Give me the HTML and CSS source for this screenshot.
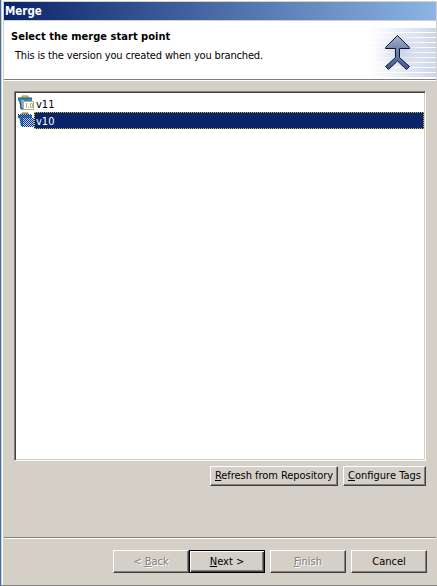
FILE: index.html
```html
<!DOCTYPE html>
<html lang="en">
<head>
<meta charset="utf-8">
<title>Merge</title>
<link rel="stylesheet" href="styles.css">
</head>
<body>
<main class="window">
  <div class="titlebar"><span class="t-title">Merge</span></div>
  <header class="banner">
    <div class="heading">
      <h1><span class="t-head">Select the merge start point</span></h1>
      <p><span class="t-desc">This is the version you created when you branched.</span></p>
    </div>
    <svg class="art" width="76" height="58" viewBox="0 0 76 58">
      <defs>
        <linearGradient id="fade"><stop offset="0" stop-color="#fff"/><stop offset=".4" stop-color="#fff" stop-opacity=".65"/><stop offset="1" stop-color="#fff" stop-opacity="0"/></linearGradient>
        <radialGradient id="glow"><stop offset="0" stop-color="#bcc4e4"/><stop offset="1" stop-color="#e6ebf6" stop-opacity="0"/></radialGradient>
        <linearGradient id="steel" gradientUnits="userSpaceOnUse" x1="0" y1="14" x2="0" y2="48"><stop offset="0" stop-color="#a9b4cc"/><stop offset=".4" stop-color="#7388b4"/><stop offset="1" stop-color="#3e5c95"/></linearGradient>
        <pattern id="lines" width="6" height="5" patternUnits="userSpaceOnUse" y="2"><path d="M0 0H6V4H0Z" fill="#ccd6ea"/></pattern>
      </defs>
      <path d="M8 7H76V56H8Z" fill="url(#lines)"/>
      <path d="M8 7H76V56H8Z" fill="url(#fade)"/>
      <ellipse cx="42" cy="31" rx="29" ry="25" fill="url(#glow)" opacity=".7"/>
      <path d="M37.500 14.500L49.500 26.500V27.500H39.500V36.500L49.500 45.500L46.500 48.500L37.500 40L28.500 48.500L25.500 45.500L35.500 36.500V27.500H25.500V26.500Z" fill="url(#steel)" stroke="#10182e"/>
    </svg>
  </header>
  <section class="content">
    <div class="list">
      <div class="row">
        <svg width="16" height="16" viewBox="0 0 16 16">
          <path d="M4 3V1H10V3" fill="#f2d36b" stroke="#a98635"/>
          <path d="M0 3H14V6H0Z" fill="#348bb5"/><path d="M1 5H14L12 14H3Z" fill="#3f7fb5"/>
          <path d="M0 3H14M2 6L3 14H6" fill="none" stroke="#17557d"/><path d="M3 5H6V13H4Z" fill="#71bed1"/>
          <path d="M5.500 6.500H15.500V14.500H5.500Z" fill="#fffdf0" stroke="#b8ac83"/>
          <path d="M8.500 8V13M10 12.500H11M12.500 8.500H14.500V12.500H12.500Z" fill="none" stroke="#b7b1a0"/>
        </svg>
        <span class="label"><span class="t-row">v11</span></span>
      </div>
      <div class="row selected">
        <svg width="16" height="16" viewBox="0 0 16 16">
          <defs><pattern id="check" width="2" height="2" patternUnits="userSpaceOnUse"><path d="M0 0H1V1H0ZM1 1H2V2H1Z" fill="#173a86"/></pattern></defs>
          <path d="M4 3V1H10V3" fill="#d3bd75" stroke="#796a43"/>
          <path d="M0 3H14V6H0Z" fill="#348bb5"/><path d="M1 5H14L12 14H3Z" fill="#3f86c5"/><path d="M5 6H16V15H5Z" fill="#b9cbe6"/>
          <path d="M0 2H14V6H16V15H3L2 6H0Z" fill="url(#check)"/>
        </svg>
        <span class="label"><span class="t-row">v10</span></span>
      </div>
    </div>
    <div class="tools">
      <button class="btn refresh"><span class="t-refresh"><u>R</u>efresh from Repository</span></button>
      <button class="btn config"><span class="t-config"><u>C</u>onfigure Tags</span></button>
    </div>
  </section>
  <footer>
    <button class="btn nav disabled" disabled><span class="t-back">&lt; <u>B</u>ack</span></button>
    <button class="btn nav default"><span class="t-next"><u>N</u>ext &gt;</span></button>
    <button class="btn nav disabled finish" disabled><span class="t-finish"><u>F</u>inish</span></button>
    <button class="btn nav cancel"><span class="t-cancel">Cancel</span></button>
  </footer>
</main>
</body>
</html>
```
FILE: styles.css
```css
* { box-sizing: border-box; }
body { margin: 0; overflow: hidden; font: 11px/14px "DejaVu Sans Condensed", "DejaVu Sans", sans-serif; font-stretch: condensed; color: #000; }
span { white-space: nowrap; }
.window { width: 437px; height: 586px; display: flex; flex-direction: column; background: #d4d0c8; border-left: 1px solid #3a6eb5; border-bottom: 1px solid #808080; padding: 2px 1px 0 3px; box-shadow: inset 1px 0 #d4d0c8, inset 2px 1px #fff; }
.titlebar { height: 18px; padding: 2px 0 0 1px; background: linear-gradient(90deg, #0a246a, #8cb4e4); color: #fff; font-weight: bold; font-size: 11.5px; }
.banner { height: 59px; margin-top: 1px; display: flex; justify-content: space-between; background: #fff; border-bottom: 1px solid #808080; box-shadow: 0 1px #fff; }
.heading { padding: 9px 0 0 7px; }
h1 { margin: 0; font-size: 11px; line-height: 14px; font-weight: bold; letter-spacing: .03px; }
p { margin: 5px 0 0 4px; }
.t-desc { letter-spacing: -.17px; }
.content { height: 457px; padding: 11px 10px 0; }
.list { width: 412px; height: 370px; background: #fff; border: 1px solid; border-color: #808080 #fff #fff #808080; box-shadow: inset 1px 1px #404040, inset -1px -1px #d4d0c8; padding: 3px 1px 1px 3px; }
.row { display: flex; height: 17px; }
.row svg { flex: none; }
.label { flex: 1; padding: 3px 0 0 2px; }
.selected .label { background: #0a246a; background-clip: padding-box; color: #fff; border: 1px dotted #d8b820; padding: 1px 0 0 1px; line-height: 15px; }
.selected .label { background-clip: border-box; }
.tools { display: flex; justify-content: flex-end; gap: 5px; margin: 5px 0 0; width: 412px; }
.btn { display: flex; align-items: center; justify-content: center; padding: 0; margin: 0; background: #d4d0c8; color: #000; font: inherit; border: 1px solid; border-color: #fff #404040 #404040 #fff; box-shadow: inset -1px -1px #808080; border-radius: 0; }
.refresh { width: 128px; height: 20px; letter-spacing: -.05px; }
.config { width: 83px; height: 20px; }
footer { display: flex; justify-content: flex-end; height: 48px; padding: 12px 9px 0 0; border-top: 1px solid #808080; box-shadow: inset 0 1px #fff; }
.nav { width: 76px; height: 23px; }
.default { border-color: #000; box-shadow: inset 1px 1px #fff, inset -1px -1px #404040, inset -2px -2px #808080; }
.finish, .cancel { margin-left: 5px; }
.disabled { color: #808080; text-shadow: 1px 1px #fff; }
u { text-decoration: underline; text-underline-offset: 1px; text-decoration-skip-ink: none; }
```
